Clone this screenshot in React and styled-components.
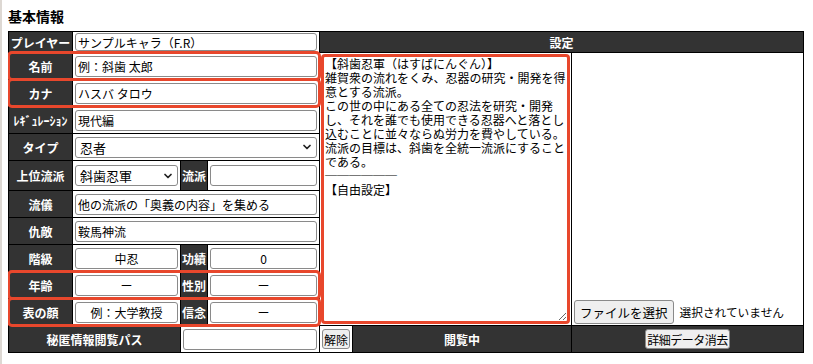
import React from "react";
import styled, { createGlobalStyle } from "styled-components";
import { ChevronDown } from "lucide-react";

const GlobalStyle = createGlobalStyle`
  html {
    min-height: 100%;
    box-shadow: inset 2px 0 0 #ddd8d3;
  }
  body {
    margin: 8px;
    background: #fff;
    color: #000;
    font-family: "Noto Sans CJK JP", "Noto Sans", sans-serif;
  }
`;

const Title = styled.h3`
  margin: 0 0 7px;
  font-size: 14px;
  line-height: 16px;
  font-weight: bold;
`;

const Sheet = styled.div`
  display: grid;
  box-sizing: border-box;
  width: 796px;
  grid-template-columns: 63px 107px 26px 111px 32px 218px 231px;
  grid-template-rows: 20px repeat(4, 26px) 29px repeat(6, 26px);
  gap: 1px;
  border: 1px solid #000;
  background: #000;
`;

const Row = styled.div`
  grid-column: ${p => (p.$full ? "1 / -1" : "1 / 5")};
  display: grid;
  grid-template-columns: subgrid;
  border-radius: 3px;
  outline: ${p => (p.$marked ? "3px solid #e8472c" : "none")};
  outline-offset: -1px;
  position: relative;
  z-index: ${p => (p.$marked ? 1 : "auto")};
`;

const Label = styled.div`
  grid-column: span ${p => p.$span || 1};
  display: flex;
  align-items: center;
  justify-content: center;
  background: #333;
  color: #fff;
  font-size: 12px;
  font-weight: bold;
  white-space: nowrap;
  overflow: hidden;
`;

const Cell = styled.div`
  grid-column: span ${p => p.$span || 1};
  display: flex;
  align-items: center;
  min-width: 0;
  padding: 0 2px;
  background: #fff;
`;

const TextBox = styled.input`
  box-sizing: border-box;
  width: 100%;
  height: ${p => (p.$short ? "18px" : "21px")};
  padding: 0 2px;
  border: 1px solid #8a8a8a;
  border-radius: 3px;
  background: #fff;
  color: #000;
  font: 12px "Noto Sans CJK JP", sans-serif;
  text-align: ${p => (p.$center ? "center" : "left")};
`;

const SelectWrap = styled.div`
  position: relative;
  display: flex;
  width: 100%;
`;

const Select = styled.select`
  box-sizing: border-box;
  width: 100%;
  height: 21px;
  padding: 0 16px 0 4px;
  border: 1px solid #8a8a8a;
  border-radius: 3px;
  background: #fff;
  color: #000;
  font: 13px "Noto Sans CJK JP", sans-serif;
  appearance: none;
`;

const Chevron = styled(ChevronDown)`
  position: absolute;
  right: 4px;
  top: 50%;
  transform: translateY(-50%);
  pointer-events: none;
`;

const Memo = styled.div`
  grid-column: 5 / 7;
  grid-row: 2 / 12;
  display: flex;
  padding: 1px;
  background: #fff;
`;

const MemoText = styled.textarea`
  box-sizing: border-box;
  width: 100%;
  height: 100%;
  margin: 0;
  padding: 0 1px;
  border: 3px solid #e8472c;
  border-radius: 4px;
  color: #000;
  font: 12px/14px "Noto Sans CJK JP", sans-serif;
  outline: none;
`;

const Side = styled.div`
  grid-column: 7;
  grid-row: 2 / 12;
  display: flex;
  align-items: flex-end;
  gap: 6px;
  padding: 0 2px 1px;
  background: #fff;
`;

const Button = styled.button`
  height: ${p => (p.$tall ? "24px" : "20px")};
  padding: 0 ${p => (p.$tall ? "5px" : "1px")};
  border: 1px solid #8a8a8a;
  border-radius: 3px;
  background: #efefef;
  color: #000;
  font: ${p => (p.$tall ? "12.5px" : "12px")} "Noto Sans CJK JP", sans-serif;
  letter-spacing: ${p => (p.$tight ? "-0.5px" : "0")};
  white-space: nowrap;
`;

const FileNote = styled.span`
  margin-bottom: 4px;
  font-size: 11.7px;
  white-space: nowrap;
`;

const ButtonCell = styled(Cell)`
  justify-content: center;
  padding: 0;
  background: ${p => (p.$dark ? "#333" : "#fff")};
`;

const memo = `【斜歯忍軍（はすばにんぐん）】
雑賀衆の流れをくみ、忍器の研究・開発を得意とする流派。
この世の中にある全ての忍法を研究・開発し、それを誰でも使用できる忍器へと落とし込むことに並々ならぬ労力を費やしている。
流派の目標は、斜歯を全統一流派にすることである。
──────
【自由設定】`;

const Dropdown = ({ value }) => (
  <SelectWrap>
    <Select defaultValue={value}>
      <option>{value}</option>
    </Select>
    <Chevron size={12} strokeWidth={3.5} color="#222" />
  </SelectWrap>
);

const Line = ({ label, value, marked }) => (
  <Row $marked={marked}>
    <Label>{label}</Label>
    <Cell $span={3}>
      <TextBox defaultValue={value} />
    </Cell>
  </Row>
);

const Pair = ({ label, value, sub, subValue, marked }) => (
  <Row $marked={marked}>
    <Label>{label}</Label>
    <Cell>
      <TextBox $center defaultValue={value} />
    </Cell>
    <Label>{sub}</Label>
    <Cell>
      <TextBox $center defaultValue={subValue} />
    </Cell>
  </Row>
);

export default function App() {
  return (
    <>
      <GlobalStyle />
      <Title>基本情報</Title>
      <Sheet>
        <Row $full>
          <Label>プレイヤー</Label>
          <Cell $span={3}>
            <TextBox $short defaultValue="サンプルキャラ（F.R）" />
          </Cell>
          <Label $span={3}>設定</Label>
        </Row>

        <Line label="名前" value="例：斜歯 太郎" marked />
        <Line label="カナ" value="ハスバ タロウ" marked />
        <Line label="ﾚｷﾞｭﾚｰｼｮﾝ" value="現代編" />
        <Row>
          <Label>タイプ</Label>
          <Cell $span={3}>
            <Dropdown value="忍者" />
          </Cell>
        </Row>
        <Row>
          <Label>上位流派</Label>
          <Cell>
            <Dropdown value="斜歯忍軍" />
          </Cell>
          <Label>流派</Label>
          <Cell>
            <TextBox defaultValue="" />
          </Cell>
        </Row>
        <Line label="流儀" value="他の流派の「奥義の内容」を集める" />
        <Line label="仇敵" value="鞍馬神流" />
        <Pair label="階級" value="中忍" sub="功績" subValue="0" />
        <Pair label="年齢" value="ー" sub="性別" subValue="ー" marked />
        <Pair label="表の顔" value="例：大学教授" sub="信念" subValue="ー" marked />

        <Memo>
          <MemoText defaultValue={memo} />
        </Memo>
        <Side>
          <Button $tall>ファイルを選択</Button>
          <FileNote>選択されていません</FileNote>
        </Side>

        <Row $full>
          <Label $span={2}>秘匿情報閲覧パス</Label>
          <Cell $span={2}>
            <TextBox defaultValue="" />
          </Cell>
          <ButtonCell>
            <Button>解除</Button>
          </ButtonCell>
          <Label>閲覧中</Label>
          <ButtonCell $dark>
            <Button $tight>詳細データ消去</Button>
          </ButtonCell>
        </Row>
      </Sheet>
    </>
  );
}
